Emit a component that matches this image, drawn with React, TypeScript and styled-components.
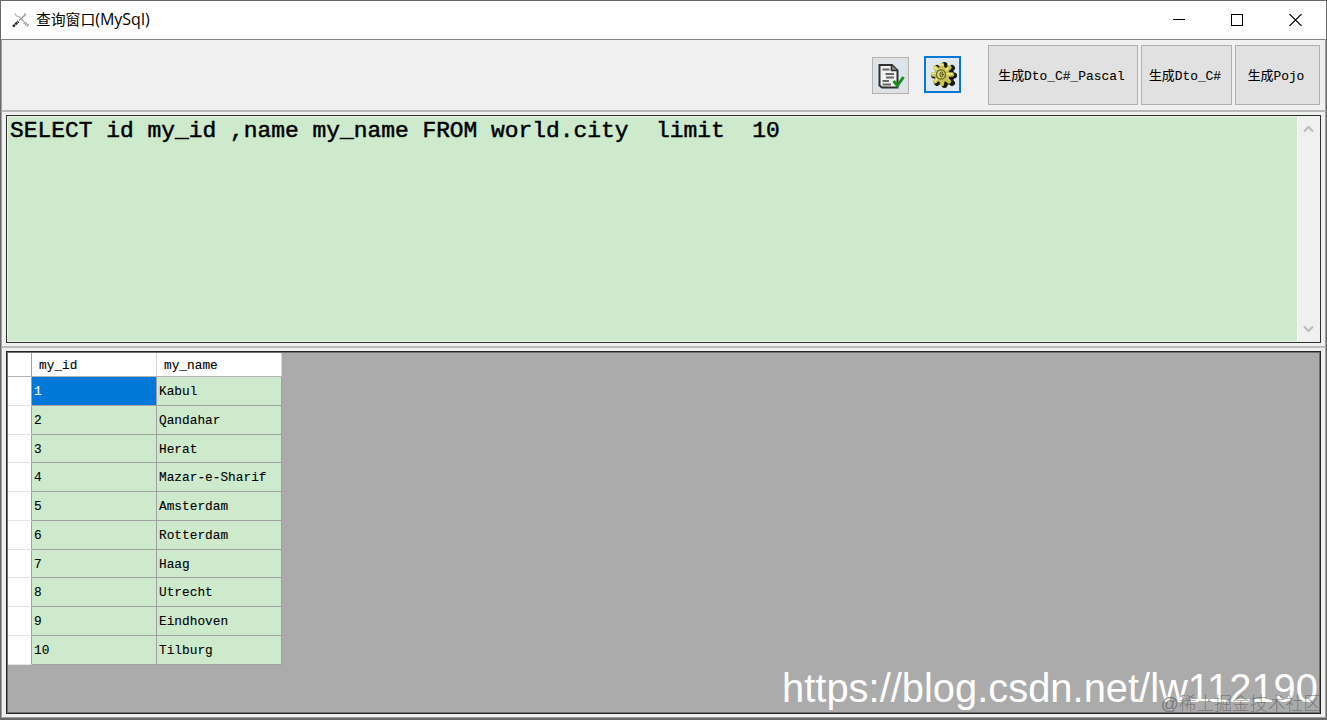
import React from 'react';
import { createGlobalStyle, styled } from 'styled-components';

const cities = [
  'Kabul',
  'Qandahar',
  'Herat',
  'Mazar-e-Sharif',
  'Amsterdam',
  'Rotterdam',
  'Haag',
  'Utrecht',
  'Eindhoven',
  'Tilburg',
];

const App: React.FC = () => {
  return (
    <>
      <GlobalStyle />
      <Window>
        <TitleBar>
          <ToolsIcon />
          <Title>
            查询窗口<TitleLatin>(MySql)</TitleLatin>
          </Title>
          <WindowButton>
            <svg width="12" height="12" shapeRendering="crispEdges">
              <path d="M0 5.5H12" stroke="#000" />
            </svg>
          </WindowButton>
          <WindowButton>
            <svg width="12" height="12" shapeRendering="crispEdges">
              <rect x=".5" y=".5" width="11" height="11" fill="none" stroke="#000" />
            </svg>
          </WindowButton>
          <WindowButton>
            <svg width="13" height="12">
              <path d="M.5 0L12.5 12M12.5 0L.5 12" stroke="#000" strokeWidth="1.1" />
            </svg>
          </WindowButton>
        </TitleBar>
        <Toolbar>
          <IconButton>
            <ScriptIcon />
          </IconButton>
          <IconButton $active>
            <GearIcon />
          </IconButton>
          <ButtonGroup>
            <ToolButton $width={150}>生成Dto_C#_Pascal</ToolButton>
            <ToolButton $width={91}>生成Dto_C#</ToolButton>
            <ToolButton $width={85}>生成Pojo</ToolButton>
          </ButtonGroup>
        </Toolbar>
        <EditorPane>
          <Editor>
            <Query>{'SELECT id my_id ,name my_name FROM world.city  limit  10'}</Query>
            <Scrollbar>
              <svg width="11" height="8">
                <path d="M1 6.5L5.5 2L10 6.5" fill="none" stroke="#bcbcbc" strokeWidth="2.2" />
              </svg>
              <svg width="11" height="8">
                <path d="M1 1.5L5.5 6L10 1.5" fill="none" stroke="#bcbcbc" strokeWidth="2.2" />
              </svg>
            </Scrollbar>
          </Editor>
        </EditorPane>
        <ResultPane>
          <Result>
            <Table>
              <HeaderRow>
                <HeaderCell />
                <HeaderCell>my_id</HeaderCell>
                <HeaderCell>my_name</HeaderCell>
              </HeaderRow>
              {cities.map((city, index) => (
                <Row key={city}>
                  <RowHeader />
                  <Cell $selected={index === 0}>{index + 1}</Cell>
                  <Cell>{city}</Cell>
                </Row>
              ))}
            </Table>
          </Result>
        </ResultPane>
        <BlogMark>https://blog.csdn.net/lw112190</BlogMark>
        <CommunityMark>@稀土掘金技术社区</CommunityMark>
      </Window>
    </>
  );
};

const ToolsIcon: React.FC = () => (
  <svg width="18" height="16" viewBox="0 0 18 16" fill="none">
    <path d="M1 14.5L6.5 9.5" stroke="#222" strokeWidth="2.4" strokeDasharray="2.5 .6" />
    <path d="M7 8.5L13 3" stroke="#888" strokeWidth="1.2" />
    <path d="M12 1.5L14.5 3" stroke="#999" />
    <path d="M3 1.5L4.5 4L7 4.5L12 9.5" stroke="#aaa" strokeWidth="1.1" />
    <path d="M12 10.5L16.5 14" stroke="#888" strokeWidth="2.8" strokeDasharray="1.2 .8" />
  </svg>
);

const ScriptIcon: React.FC = () => (
  <svg width="28" height="28" viewBox="0 0 28 28">
    <path
      d="M2.5 3H15L20.5 8.5V25.5H5L2.5 23.5Z"
      fill="#f1f1f1"
      stroke="#303030"
      strokeWidth="2"
    />
    <path d="M14.5 3V8.5H20.5" fill="#8a8a8a" stroke="#303030" strokeWidth="1.6" />
    <path d="M5.5 7.5H12.5M8.5 12H17M9 15.5H17M5.5 19H12M5.5 22.5H14" stroke="#666" strokeWidth="2" />
    <path d="M16.5 19L20.5 23.5L26.5 15" fill="none" stroke="#168f1c" strokeWidth="3" />
  </svg>
);

const GearIcon: React.FC = () => (
  <svg width="28" height="28" viewBox="0 0 28 28" strokeLinecap="round">
    <g stroke="#191a08" strokeWidth="6">
      <path d="M15.5 4V24M5 14.5H25M8 7L23 22M23 7L8 22" />
      <circle cx="15.5" cy="14.5" r="7" fill="#191a08" />
    </g>
    <g stroke="#c6c44c" strokeWidth="4.4">
      <path d="M13 4V23M4 13.5H23M6 6.5L20 20.5M20.5 6.5L6 20.5" />
      <circle cx="13" cy="13.5" r="5.5" fill="#c6c44c" />
    </g>
    <path d="M11.5 4H14M5 6.5L8 8M3.5 12.5H7M19 7L17 9M18 13H23M6 20L8 18" stroke="#efedab" strokeWidth="1.5" />
    <circle cx="12" cy="13.5" r="4.5" fill="#e0de7c" stroke="#77762c" strokeWidth="1.6" />
    <ellipse cx="12.5" cy="13.5" rx="1.6" ry="2.6" fill="#b0ad48" stroke="#515014" />
  </svg>
);

const GlobalStyle = createGlobalStyle`
  * {
    box-sizing: border-box;
  }
  body {
    margin: 0;
    overflow: hidden;
  }
`;

const Window = styled.div`
  position: relative;
  width: 1327px;
  height: 720px;
  display: flex;
  flex-direction: column;
  background: #f0f0f0;
  border: solid #6b6968;
  border-width: 1px 1px 2px;
`;

const TitleBar = styled.div`
  height: 38px;
  flex: none;
  display: flex;
  align-items: center;
  padding-left: 11px;
  background: #fff;
`;

const Title = styled.div`
  flex: 1;
  margin: -2px 0 0 6px;
  font: 14.8px/20px 'Noto Sans CJK SC', sans-serif;
  color: #000;
`;

const TitleLatin = styled.span`
  font: 16px/20px 'Open Sans', sans-serif;
`;

const WindowButton = styled.div`
  width: 58.5px;
  display: flex;
  justify-content: center;
  position: relative;
  left: -1px;
`;

const Toolbar = styled.div`
  height: 73px;
  flex: none;
  display: flex;
  align-items: flex-start;
  justify-content: flex-end;
  padding: 5px 5px 0 0;
  border: 1px solid #a0a0a0;
  border-top: 1px solid #858585;
  border-bottom: 2px solid #b9b9b9;
`;

const IconButton = styled.div<{ $active?: boolean }>`
  width: 37px;
  height: 37px;
  margin: ${({ $active }) => ($active ? '11px 27px 0 15px' : '12px 0 0')};
  display: flex;
  justify-content: center;
  align-items: center;
  background: ${({ $active }) => ($active ? '#dfe8f0' : '#dce5ee')};
  border: ${({ $active }) => ($active ? '2px solid #0878d7' : '1px solid #b3b3b3')};
  box-shadow: ${({ $active }) => ($active ? 'none' : 'inset 0 0 0 3px #e1e1e1')};
`;

const ButtonGroup = styled.div`
  display: flex;
  gap: 3px;
`;

const ToolButton = styled.div<{ $width: number }>`
  width: ${({ $width }) => $width}px;
  height: 60px;
  display: flex;
  justify-content: center;
  align-items: center;
  padding: 3px 3px 0 0;
  background: #e1e1e1;
  border: 1px solid #b0b0b0;
  white-space: nowrap;
  font: 12.9px/20px 'Liberation Mono', 'Noto Sans CJK SC', monospace;
  color: #000;
  -webkit-text-stroke: 0.1px #000;
`;

const EditorPane = styled.div`
  height: 236px;
  flex: none;
  padding: 3px 4px 4px;
  border: 1px solid #a0a0a0;
  border-width: 0 1px 2px;
  border-bottom-color: #bcbcbc;
`;

const Editor = styled.div`
  height: 228px;
  display: flex;
  border: 1px solid #303030;
  box-shadow: inset 0 0 0 1px #e9f3e7;
  padding: 1px;
`;

const Query = styled.div`
  flex: 1;
  padding: 0 2px;
  background: #ceeacc;
  white-space: pre;
  font: 22.92px/28px 'Liberation Mono', monospace;
  color: #000;
  -webkit-text-stroke: 0.5px #000;
`;

const Scrollbar = styled.div`
  width: 22px;
  display: flex;
  flex-direction: column;
  justify-content: space-between;
  align-items: center;
  padding: 8px 0;
  background: #f0f0f0;
  border-left: 1px solid #f8f8f8;
`;

const ResultPane = styled.div`
  flex: 1;
  min-height: 0;
  padding: 3px 4px 3px;
  border: solid #a0a0a0;
  border-width: 0 1px 1px;
`;

const Result = styled.div`
  height: 100%;
  padding: 1px;
  background: #ababab;
  border: 1px solid #252525;
  box-shadow: inset 0 0 0 1px #707070;
`;

const Table = styled.div`
  width: 274px;
  font: 12.8px/20px 'Liberation Mono', monospace;
  color: #000;
  -webkit-text-stroke: 0.1px;
`;

const HeaderRow = styled.div`
  height: 24px;
  display: grid;
  grid-template-columns: 24px 125px 125px;
  background: #fff;
  border-bottom: 1px solid #b4b4b4;
`;

const HeaderCell = styled.div`
  padding: 3px 0 0 7px;
  border-right: 1px solid #d5d5d5;

  &:first-child {
    border-right-color: #a0a0a0;
  }
`;

const Row = styled.div`
  height: 28.75px;
  display: grid;
  grid-template-columns: 24px 125px 125px;
`;

const RowHeader = styled.div`
  background: #fff;
  border-right: 1px solid #a0a0a0;
  border-bottom: 1px solid #e3e3e3;
`;

const Cell = styled.div<{ $selected?: boolean }>`
  padding: 5px 0 0 2px;
  background: ${({ $selected }) => ($selected ? '#0078d7' : '#ceeacc')};
  color: ${({ $selected }) => ($selected ? '#fff' : '#000')};
  border-right: 1px solid #a0a0a0;
  border-bottom: 1px solid #a0a0a0;
`;

// Both marks float over the result grid
const BlogMark = styled.div`
  position: absolute;
  right: 8px;
  bottom: 7px;
  white-space: nowrap;
  font: 39.9px/46px 'Liberation Sans', sans-serif;
  color: #fff;
`;

const CommunityMark = styled.div`
  position: absolute;
  right: 5px;
  bottom: 3px;
  white-space: nowrap;
  font: 300 17.8px/22px 'Liberation Sans', 'Noto Sans CJK SC', sans-serif;
  color: rgba(85, 85, 85, 0.6);
`;

export default App;
